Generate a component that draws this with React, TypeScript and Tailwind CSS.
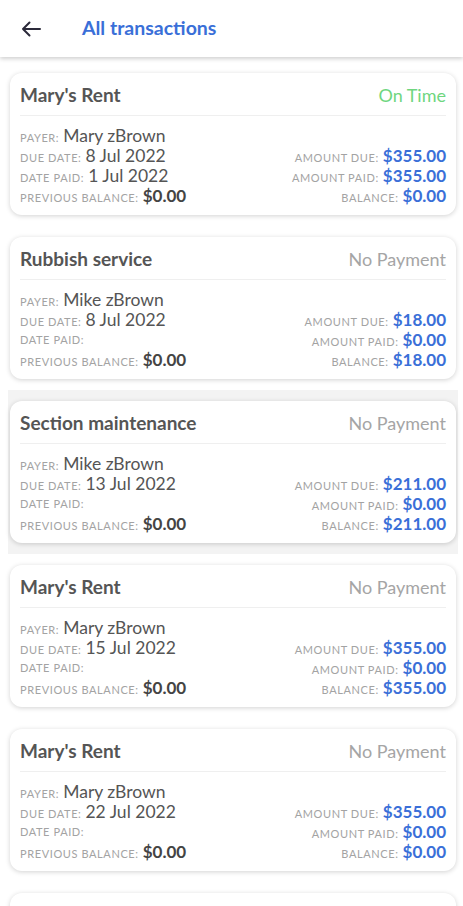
import React from "react";

type Tx = {
  title: string;
  status: string;
  onTime?: boolean;
  payer: string;
  dueDate: string;
  datePaid: string;
  prevBalance: string;
  amountDue: string;
  amountPaid: string;
  balance: string;
  active?: boolean;
};

const transactions: Tx[] = [
  {
    title: "Mary's Rent",
    status: "On Time",
    onTime: true,
    payer: "Mary zBrown",
    dueDate: "8 Jul 2022",
    datePaid: "1 Jul 2022",
    prevBalance: "$0.00",
    amountDue: "$355.00",
    amountPaid: "$355.00",
    balance: "$0.00",
  },
  {
    title: "Rubbish service",
    status: "No Payment",
    payer: "Mike zBrown",
    dueDate: "8 Jul 2022",
    datePaid: "",
    prevBalance: "$0.00",
    amountDue: "$18.00",
    amountPaid: "$0.00",
    balance: "$18.00",
  },
  {
    title: "Section maintenance",
    status: "No Payment",
    payer: "Mike zBrown",
    dueDate: "13 Jul 2022",
    datePaid: "",
    prevBalance: "$0.00",
    amountDue: "$211.00",
    amountPaid: "$0.00",
    balance: "$211.00",
    active: true,
  },
  {
    title: "Mary's Rent",
    status: "No Payment",
    payer: "Mary zBrown",
    dueDate: "15 Jul 2022",
    datePaid: "",
    prevBalance: "$0.00",
    amountDue: "$355.00",
    amountPaid: "$0.00",
    balance: "$355.00",
  },
  {
    title: "Mary's Rent",
    status: "No Payment",
    payer: "Mary zBrown",
    dueDate: "22 Jul 2022",
    datePaid: "",
    prevBalance: "$0.00",
    amountDue: "$355.00",
    amountPaid: "$0.00",
    balance: "$0.00",
  },
  {
    title: "Mary's Rent",
    status: "No Payment",
    payer: "Mary zBrown",
    dueDate: "29 Jul 2022",
    datePaid: "",
    prevBalance: "$0.00",
    amountDue: "$355.00",
    amountPaid: "$0.00",
    balance: "$0.00",
  },
];

function Label({ children }: { children: React.ReactNode }) {
  return (
    <span className="text-[11px] uppercase tracking-[0.6px] text-[#a3a3a3] mr-[4px]">
      {children}
    </span>
  );
}

function Card({ tx }: { tx: Tx }) {
  return (
    <div className="bg-white rounded-[12px] shadow-[0_1px_5px_rgba(0,0,0,0.18)] px-[10px] h-[142px]">
      {/* TITLE ROW */}
      <div className="flex items-center justify-between pt-[10px] pb-[8px] border-b border-[#efefef]">
        <span className="text-[19px] leading-[24px] font-bold text-[#555555]">{tx.title}</span>
        <span
          className={`text-[18px] leading-[24px] ${tx.onTime ? "text-[#6fd67f]" : "text-[#a5a5a5]"}`}
        >
          {tx.status}
        </span>
      </div>

      {/* DETAILS */}
      <div className="flex justify-between pt-[10px]">
        <div className="flex flex-col">
          <div className="h-[20px] leading-[20px] flex items-baseline">
            <Label>Payer:</Label>
            <span className="text-[17.5px] text-[#555555]">{tx.payer}</span>
          </div>
          <div className="h-[20px] leading-[20px] flex items-baseline">
            <Label>Due date:</Label>
            <span className="text-[17.5px] text-[#555555]">{tx.dueDate}</span>
          </div>
          <div className="h-[20px] leading-[20px] flex items-baseline">
            <Label>Date paid:</Label>
            <span className="text-[17.5px] text-[#555555]">{tx.datePaid}</span>
          </div>
          <div className="h-[20px] leading-[20px] flex items-baseline">
            <Label>Previous balance:</Label>
            <span className="text-[17px] font-bold text-[#444444]">{tx.prevBalance}</span>
          </div>
        </div>
        <div className="flex flex-col items-end pt-[20px]">
          <div className="h-[20px] leading-[20px] flex items-baseline">
            <Label>Amount due:</Label>
            <span className="text-[17px] font-bold text-[#3a6fd8]">{tx.amountDue}</span>
          </div>
          <div className="h-[20px] leading-[20px] flex items-baseline">
            <Label>Amount paid:</Label>
            <span className="text-[17px] font-bold text-[#3a6fd8]">{tx.amountPaid}</span>
          </div>
          <div className="h-[20px] leading-[20px] flex items-baseline">
            <Label>Balance:</Label>
            <span className="text-[17px] font-bold text-[#3a6fd8]">{tx.balance}</span>
          </div>
        </div>
      </div>
    </div>
  );
}

export default function App() {
  return (
    <div
      className="w-[463px] h-[906px] overflow-hidden bg-white"
      style={{ fontFamily: "Lato, 'Open Sans', sans-serif" }}
    >
      {/* HEADER */}
      <header className="relative z-10 h-[57px] flex items-center bg-white shadow-[0_2px_4px_rgba(0,0,0,0.18)]">
        <button className="ml-[20px] w-[22px] h-[22px] flex items-center justify-center" aria-label="Back">
          <svg width="20" height="16" viewBox="0 0 20 16" fill="none">
            <path d="M19 8H2M8.5 1.5L2 8l6.5 6.5" stroke="#2b2a3a" strokeWidth="2" strokeLinecap="round" strokeLinejoin="round" />
          </svg>
        </button>
        <h1 className="ml-[40px] -mt-[2px] text-[19.5px] font-bold text-[#3a6fd8]">All transactions</h1>
      </header>

      {/* LIST */}
      <div className="pt-[5px] pl-[8px] pr-[5px]">
        {transactions.map((tx, i) => (
          <div key={i} className={`px-[2px] py-[11px] ${tx.active ? "bg-[#f3f3f3]" : ""}`}>
            <Card tx={tx} />
          </div>
        ))}
      </div>
    </div>
  );
}
